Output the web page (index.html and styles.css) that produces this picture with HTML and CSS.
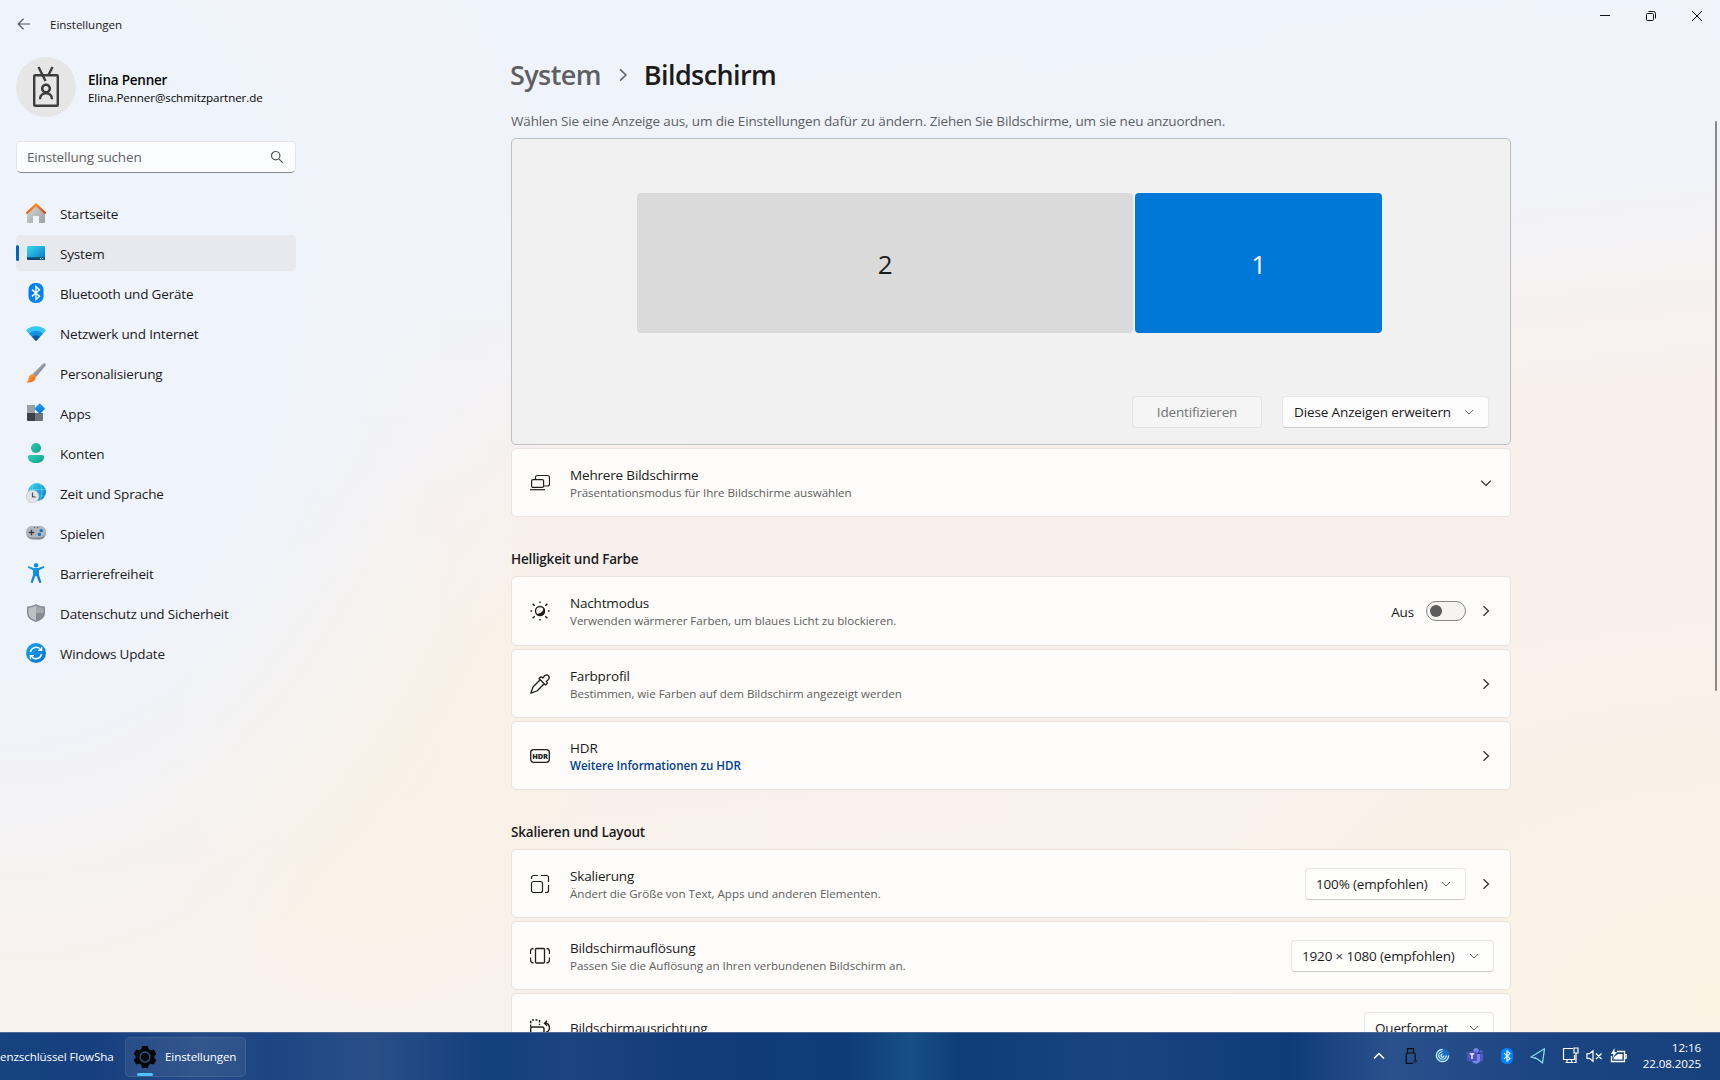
FILE: index.html
```html
<!DOCTYPE html>
<html lang="de">
<head>
<meta charset="utf-8">
<title>Einstellungen</title>
<link rel="stylesheet" href="styles.css">
</head>
<body>
<svg class="defs" aria-hidden="true">
  <defs>
    <linearGradient id="roof" x1="0" y1="0" x2="1" y2="1"><stop offset="0" stop-color="#ff9a1f"/><stop offset="1" stop-color="#d84a1b"/></linearGradient>
    <linearGradient id="grey" x1="0" y1="0" x2="1" y2="1"><stop offset="0" stop-color="#d9dbdd"/><stop offset="1" stop-color="#9c9fa3"/></linearGradient>
    <linearGradient id="screen" x1="0" y1="0" x2="1" y2="1"><stop offset="0" stop-color="#37dcf0"/><stop offset="1" stop-color="#0a72c4"/></linearGradient>
    <linearGradient id="teal" x1="0" y1="0" x2="1" y2="1"><stop offset="0" stop-color="#2ad0b4"/><stop offset="1" stop-color="#12a08c"/></linearGradient>
    <linearGradient id="blue" x1="0" y1="0" x2="1" y2="1"><stop offset="0" stop-color="#1aa5ec"/><stop offset="1" stop-color="#0671d4"/></linearGradient>
    <linearGradient id="flame" x1="0" y1="0" x2="1" y2="1"><stop offset="0" stop-color="#ffb13b"/><stop offset="1" stop-color="#ec5c14"/></linearGradient>
    <linearGradient id="steel" x1="0" y1="0" x2="1" y2="1"><stop offset="0" stop-color="#b9bfc6"/><stop offset="1" stop-color="#6d737b"/></linearGradient>
    <symbol id="down" viewBox="0 0 12 12"><path d="M1.2 3.8 6 8.4l4.8-4.6" fill="none" stroke="currentColor" stroke-width="1.2"/></symbol>
    <symbol id="right" viewBox="0 0 12 12"><path d="M3.5 1.2 8.5 6l-5 4.8" fill="none" stroke="currentColor" stroke-width="1.3"/></symbol>
  </defs>
</svg>
<div class="window">
  <header class="titlebar">
    <svg class="back" viewBox="0 0 14 12"><path d="M13 6H1.5M6.5.8 1.2 6l5.3 5.2" fill="none" stroke="#55585c" stroke-width="1.2"/></svg>
    <span class="app-name">Einstellungen</span>
    <div class="controls">
      <svg viewBox="0 0 12 12"><path d="M1 5.5h10" stroke="#111" stroke-width="1"/></svg>
      <svg viewBox="0 0 12 12" fill="none" stroke="#111"><rect x="1.5" y="3.5" width="7" height="7" rx="1"/><path d="M3.5 1.5H8.5Q10.5 1.5 10.5 3.5V8.5"/></svg>
      <svg viewBox="0 0 12 12"><path d="m1 1 10 10M11 1 1 11" stroke="#111" stroke-width="1"/></svg>
    </div>
  </header>
  <div class="body">
    <aside class="sidebar">
      <div class="account">
        <div class="avatar"><svg viewBox="0 0 28 42" fill="none" stroke="#3c3c3c" stroke-width="2.4"><path d="M6.5 1 13.5 15M20.500 1 16.500 9"/><rect x="2.200" y="9.200" width="23.600" height="30.600" rx="1"/><circle cx="14" cy="22.500" r="3.800" stroke-width="2.600"/><path d="M8 33.200c0-8 12-8 12 0" stroke-width="2.400"/></svg></div>
        <div><div class="user-name">Elina Penner</div><div class="user-mail">Elina.Penner@schmitzpartner.de</div></div>
      </div>
      <div class="search"><span>Einstellung suchen</span><svg viewBox="0 0 14 14" fill="none" stroke="#55585c" stroke-width="1.2"><circle cx="5.700" cy="5.700" r="4.200"/><path d="m8.800 8.800 4 4"/></svg></div>
      <nav class="nav">
        <a class="nav-item"><svg viewBox="0 0 20 20"><path d="M1 9 10 1l9 8v10a1 1 0 0 1-1 1h-5v-7H7v7H2a1 1 0 0 1-1-1z" fill="url(#grey)"/><path d="M1 9.800 10 1.600l9 8.200" fill="none" stroke="url(#roof)" stroke-width="2.400" stroke-linecap="round" stroke-linejoin="round"/></svg><span>Startseite</span></a>
        <a class="nav-item active"><svg viewBox="0 0 20 20"><rect x="1" y="3" width="18" height="14" rx="1" fill="url(#screen)"/><path d="M1 14.300h18V16a1 1 0 0 1-1 1H2a1 1 0 0 1-1-1z" fill="#0b4a73"/><path d="M14 15.600h1m1.200 0h1" stroke="#dff"/></svg><span>System</span></a>
        <a class="nav-item"><svg viewBox="0 0 20 20"><rect x="2.500" width="15" height="20" rx="6.500" fill="#0082fc"/><path d="m6 6.600 7.500 6.600L10 16.500v-13l3.500 3.300L6 13.400" fill="none" stroke="#fff" stroke-width="1.400"/></svg><span>Bluetooth und Geräte</span></a>
        <a class="nav-item"><svg viewBox="0 0 20 20"><path d="M0 7.500a14 14 0 0 1 20 0L10 18z" fill="#35c8f5"/><path d="M3 10.600a10 10 0 0 1 14 0L10 18z" fill="#1390df"/><path d="M6 13.800a6 6 0 0 1 8 0L10 18z" fill="#0c59a4"/></svg><span>Netzwerk und Internet</span></a>
        <a class="nav-item"><svg viewBox="0 0 20 20"><path d="M6.500 11 17 .8c1.500-1.300 3.500.2 2.500 1.900L10 14z" fill="url(#steel)"/><path d="M6.300 11.200c2 0 4 1.800 3.200 4.300-1 3-4.500 4.600-9 3.900 2.500-1.200 1.500-3 2.500-5.600.6-1.500 1.700-2.600 3.300-2.600z" fill="url(#flame)"/></svg><span>Personalisierung</span></a>
        <a class="nav-item"><svg viewBox="0 0 20 20"><path d="M1 2h8v8H1z" fill="#99a0a8"/><path d="M1 10h8v8H2a1 1 0 0 1-1-1z" fill="#3d4146"/><path d="M9 10h8v7a1 1 0 0 1-1 1H9z" fill="#6d737a"/><rect x="10" y="1.800" width="7.600" height="7.600" rx=".8" transform="rotate(45 13.800 5.600)" fill="url(#blue)"/></svg><span>Apps</span></a>
        <a class="nav-item"><svg viewBox="0 0 20 20" fill="url(#teal)"><circle cx="10" cy="5" r="5"/><path d="M4 12h12a2 2 0 0 1 2 2c0 4-3.500 6-8 6s-8-2-8-6a2 2 0 0 1 2-2z"/></svg><span>Konten</span></a>
        <a class="nav-item"><svg viewBox="0 0 20 20"><circle cx="11" cy="9" r="9" fill="url(#screen)"/><path d="M2.500 6.500h17M3 13h16M8 .8c-3 6-2 12 0 16M14 .8c3 6 2 12 0 16" fill="none" stroke="#55d3f4" stroke-width=".8"/><circle cx="6.500" cy="13.400" r="6.400" fill="#e2e3e5" stroke="#b5b8bc" stroke-width=".5"/><path d="M6.500 9.500v4.300h3" fill="none" stroke="#50545a" stroke-width="1.200"/></svg><span>Zeit und Sprache</span></a>
        <a class="nav-item"><svg viewBox="0 0 20 20"><rect y="3" width="20" height="13.500" rx="6.500" fill="url(#steel)"/><rect y="3" width="20" height="11.500" rx="5.700" fill="#b2b7bd"/><path d="M2.800 9.500h5.400M5.500 6.800v5.400" stroke="#393d42" stroke-width="1.400"/><path d="M8 4.600h1.200m2 0h1.200" stroke="#555"/><circle cx="15.300" cy="7.600" r="1.700" fill="#0a72d0"/><circle cx="13.400" cy="11.400" r="1.700" fill="#0a72d0"/></svg><span>Spielen</span></a>
        <a class="nav-item"><svg viewBox="0 0 20 20" fill="url(#blue)"><circle cx="10" cy="2.200" r="2.200"/><path d="M3 3.300 7.500 5h5L17 3.300c1.200-.4 1.700 1.300.6 1.800L13 7.300v4.500l2.200 7c.3 1.100-1.500 1.700-2 .6L10.600 13H9.400l-2.600 6.400c-.5 1.100-2.300.5-2-.6l2.200-7V7.300L2.400 5.100C1.300 4.600 1.800 2.900 3 3.300z"/></svg><span>Barrierefreiheit</span></a>
        <a class="nav-item"><svg viewBox="0 0 20 20"><path d="M10 1c2.500 1.700 5 2.400 9 2.500V10c0 4-3.500 7.500-9 9-5.500-1.500-9-5-9-9V3.500C5 3.400 7.500 2.700 10 1z" fill="#858b92"/><path d="M10 2.500v15C5.500 16 2.400 13.400 2.400 10V4.800c3-.1 5.400-.8 7.600-2.300z" fill="#bcc1c6"/><path d="M10 2.500c2.200 1.500 4.600 2.200 7.600 2.300V10H10z" fill="#a4a9b0"/></svg><span>Datenschutz und Sicherheit</span></a>
        <a class="nav-item"><svg viewBox="0 0 20 20"><circle cx="10" cy="10" r="10" fill="url(#blue)"/><path d="M4.500 9a5.700 5.700 0 0 1 10.300-2.200M15.500 11a5.700 5.700 0 0 1-10.300 2.200M15.600 3.800v3.600H12M4.400 16.200v-3.600H8" fill="none" stroke="#fff" stroke-width="1.400"/></svg><span>Windows Update</span></a>
      </nav>
    </aside>
    <main class="content">
      <h1 class="crumbs"><span class="parent">System</span><svg viewBox="0 0 12 12"><use href="#right"/></svg><span class="current">Bildschirm</span></h1>
      <p class="hint">Wählen Sie eine Anzeige aus, um die Einstellungen dafür zu ändern. Ziehen Sie Bildschirme, um sie neu anzuordnen.</p>
      <section class="arrange">
        <div class="monitors"><div class="monitor second">2</div><div class="monitor first">1</div></div>
        <div class="arrange-actions"><button class="control disabled">Identifizieren</button><button class="control extend">Diese Anzeigen erweitern<svg><use href="#down"/></svg></button></div>
      </section>
      <section class="card first-card">
        <svg class="icon" viewBox="0 0 20 20" fill="none" stroke="#1f1f1f" stroke-width="1.200"><path d="M5.500 6V4.500a2 2 0 0 1 2-2H17.500a2 2 0 0 1 2 2V11a2 2 0 0 1-2 2H14"/><rect x="1.600" y="6.600" width="12" height="7.800" rx="1.500"/><path d="M0 16.700h15"/></svg>
        <div class="label"><div class="name">Mehrere Bildschirme</div><div class="desc">Präsentationsmodus für Ihre Bildschirme auswählen</div></div>
        <svg class="chev"><use href="#down"/></svg>
      </section>
      <h2>Helligkeit und Farbe</h2>
      <section class="card tall">
        <svg class="icon" viewBox="0 0 20 20" fill="none" stroke="#1f1f1f" stroke-width="1.400"><circle cx="10" cy="10" r="4.500"/><path d="M13.500 6.500c-.2 4-2.500 6-7 6.500A4.800 4.800 0 1 0 13.500 6.500z" fill="#1f1f1f" stroke="none"/><path d="M10 .5v1.600M10 17.900v1.600M.5 10h1.600M17.900 10h1.600M2.700 2.700l2 2M15.300 15.300l2 2M2.700 17.300l2-2M15.300 4.700l2-2"/></svg>
        <div class="label"><div class="name">Nachtmodus</div><div class="desc">Verwenden wärmerer Farben, um blaues Licht zu blockieren.</div></div>
        <span class="state">Aus</span><span class="toggle"></span><svg class="chev"><use href="#right"/></svg>
      </section>
      <section class="card">
        <svg class="icon" viewBox="0 0 20 20" fill="none" stroke="#1f1f1f" stroke-width="1.300" stroke-linejoin="round"><path d="m9 4.500 2-1.800 1.700 1.300 2-2.200c2.600-2.400 6 1 3.700 3.600l-2.200 2 1.300 1.700-2 1.900zM10.200 5.800 3 13 .8 19.200 7 17l7.200-7.200"/></svg>
        <div class="label"><div class="name">Farbprofil</div><div class="desc">Bestimmen, wie Farben auf dem Bildschirm angezeigt werden</div></div>
        <svg class="chev"><use href="#right"/></svg>
      </section>
      <section class="card">
        <svg class="icon" viewBox="0 0 20 20"><rect x=".7" y="3.700" width="18.600" height="12.600" rx="3" fill="none" stroke="#1f1f1f" stroke-width="1.300"/><text x="10" y="12.800" class="hdr-text" text-anchor="middle">HDR</text></svg>
        <div class="label"><div class="name">HDR</div><a class="link">Weitere Informationen zu HDR</a></div>
        <svg class="chev"><use href="#right"/></svg>
      </section>
      <h2 class="scale-title">Skalieren und Layout</h2>
      <section class="card">
        <svg class="icon" viewBox="0 0 20 20" fill="none" stroke="#1f1f1f" stroke-width="1.200"><rect x="1.500" y="7.500" width="11" height="11" rx="2"/><path d="M1.500 5V3.500a2 2 0 0 1 2-2H8M11 1.500h5.500a2 2 0 0 1 2 2V8M18.500 11v5.500a2 2 0 0 1-2 2H15"/></svg>
        <div class="label"><div class="name">Skalierung</div><div class="desc">Ändert die Größe von Text, Apps und anderen Elementen.</div></div>
        <button class="control scale">100% (empfohlen)<svg><use href="#down"/></svg></button><svg class="chev"><use href="#right"/></svg>
      </section>
      <section class="card flush">
        <svg class="icon" viewBox="0 0 20 20" fill="none" stroke="#1f1f1f" stroke-width="1.300"><rect x="5.500" y="2.500" width="9" height="14.500" rx="1"/><path d="M3.500 2.500q-3 0-3 3V8M.5 11.500V14q0 3 3 3M16.500 2.500q3 0 3 3V8M19.500 11.500V14q0 3-3 3"/></svg>
        <div class="label"><div class="name">Bildschirmauflösung</div><div class="desc">Passen Sie die Auflösung an Ihren verbundenen Bildschirm an.</div></div>
        <button class="control resolution">1920 × 1080 (empfohlen)<svg><use href="#down"/></svg></button>
      </section>
      <section class="card flush">
        <svg class="icon" viewBox="0 0 20 20" fill="none" stroke="#1f1f1f" stroke-width="1.400"><path d="M.7 9V2M2 2h2M5.500 2h2M9.500 2v5" stroke-dasharray="2.500 1.200"/><path d="M.7 19V11q0-2 2-2H12q2 0 2 2v8M15 5.200h1.500q3 1 3 4.500t-3.500 4.500M17 2.700l-2.500 2.500L17 7.700"/></svg>
        <div class="label"><div class="name">Bildschirmausrichtung</div></div>
        <button class="control orientation">Querformat<svg><use href="#down"/></svg></button>
      </section>
    </main>
    <div class="scrollbar"></div>
  </div>
</div>
<footer class="taskbar">
  <span class="task cut">enzschlüssel FlowSha</span>
  <div class="task running"><svg viewBox="0 0 24 24"><path d="M9.200 1h5.600l.8 3 2.200 1.200 3-.8L23.300 9l-2 2.200v1.600l2 2.200-2.500 4.600-3-.8-2.200 1.200-.8 3H9.200l-.8-3-2.200-1.200-3 .8L.7 15l2-2.200v-1.600L.7 9l2.500-4.600 3 .8L8.400 4z" fill="#050608"/><circle cx="12" cy="12" r="5" fill="none" stroke="#31548a" stroke-width="1.300"/></svg>Einstellungen</div>
  <div class="tray">
    <svg class="t-up" viewBox="0 0 12 16" fill="none" stroke="#fff" stroke-width="1.500"><path d="m1 10.500 5-5 5 5"/></svg>
    <svg class="t-usb" viewBox="0 0 14 16" fill="none" stroke="#0a0d12" stroke-width="1.200"><path d="M2.500 5V.7h6V5M3 15.400H1.200V6.500Q1.200 5 2.700 5h6q1.500 0 1.500 1.500V13M3 15.400h5"/><path d="M8 12.800l1.800 2L12.500 12" stroke="#1c2c48"/></svg>
    <svg class="t-spin" viewBox="0 0 16 16" fill="none"><circle cx="8" cy="8" r="7.500" fill="#1a6cc0"/><path d="M8 1.500a6.500 6.500 0 1 0 6.500 6.500M8 4a4 4 0 1 0 4 4M8 6.500a1.600 1.600 0 1 0 1.600 1.500" stroke="#d7f0ff" stroke-width="1.300"/></svg>
    <svg class="t-teams" viewBox="0 0 16 16"><circle cx="9" cy="2.600" r="2.600" fill="#7b83eb"/><circle cx="14" cy="3.500" r="1.800" fill="#5059c9"/><path d="M5 6h8v6c0 5-8 5-8 0z" fill="#7b83eb"/><path d="M13 6h3v5c0 2-1.500 3-3 2.500z" fill="#5059c9"/><rect y="3.500" width="10" height="9.500" rx="1" fill="#4b53bc"/><path d="M2.700 5.800h4.600M5 5.800v5.200" stroke="#fff" stroke-width="1.300"/></svg>
    <svg class="t-bt" viewBox="0 0 12 16"><rect width="12" height="16" rx="5.500" fill="#0082fc"/><path d="m3 5.200 6 5.200-3 2.700V2.900l3 2.700L3 10.800" fill="none" stroke="#fff" stroke-width="1.100"/></svg>
    <svg class="t-plane" viewBox="0 0 16 16" fill="none" stroke="#85dbef" stroke-width="1.300" stroke-linejoin="round"><path d="M1 9 14.500.8 12.500 15 7.500 11zM7.500 11 4.500 9.500"/></svg>
    <svg class="t-net" viewBox="0 0 18 17" fill="none" stroke="#fff" stroke-width="1.200"><path d="M11 1.500H1.500v11h11V8M3.500 15.500h8M5 12.500v3M9.500 12.500v3M12 1h4v5h-4zM14 6v9.500h-2"/></svg>
    <svg class="t-sound" viewBox="0 0 17 16" fill="none" stroke="#fff" stroke-width="1.200"><path d="M1 5.700h2.500L7 2.800v10.400l-3.500-2.900H1zM10 5.500l5.500 5.500M15.500 5.500 10 11"/></svg>
    <svg class="t-bat" viewBox="0 0 18 16" fill="none" stroke="#fff" stroke-width="1.300"><path d="M7 3.500h7.500v10H1.500V8M14.500 6.700h1.700v3.500h-1.700"/><path d="M3.500 11.500V9.500L8 6h4.500v5.500z" fill="#fff" stroke="none"/><path d="M4.500 0 1 6h2.500L2.500 10 7 4H4.500z" fill="#fff" stroke="none"/></svg>
    <div class="clock"><span>12:16</span><span>22.08.2025</span></div>
  </div>
</footer>
</body>
</html>
```
FILE: styles.css
```css
* { box-sizing: border-box; }
body {
  margin: 0;
  width: 1720px;
  height: 1080px;
  overflow: hidden;
  display: flex;
  flex-direction: column;
  font: 13.5px/20px "Open Sans", "Noto Sans", sans-serif;
  letter-spacing: -0.17px;
  color: #1b1b1b;
}
svg { display: block; flex: none; }
.defs { position: absolute; width: 0; height: 0; }
.window {
  flex: none;
  height: 1032px;
  overflow: hidden;
  display: flex;
  flex-direction: column;
  background:
    radial-gradient(ellipse 560px 700px at 0 320px, #eff3fb 0%, #eff3fb 50%, rgba(241, 243, 247, 0.6) 75%, rgba(245, 242, 240, 0) 100%),
    radial-gradient(ellipse 620px 420px at 1720px 1000px, #faf2e3 0%, rgba(250, 242, 227, 0) 100%),
    radial-gradient(ellipse 260px 280px at 380px 740px, #faf1e6 0%, #faf1e7 50%, rgba(250, 241, 232, 0) 100%),
    linear-gradient(174deg, #eff3fb 0%, #f0f3fa 26%, #f4f2f3 35%, #f9f0ed 46%, #f9f1eb 100%);
}
.titlebar { flex: none; height: 48px; display: flex; align-items: center; padding: 0 17px; }
.back { width: 14px; height: 12px; }
.app-name { font-size: 11.6px; margin-left: 19px; padding-top: 2px; letter-spacing: -0.05px; }
.controls { margin-left: auto; align-self: flex-start; display: flex; gap: 34px; padding-top: 10px; }
.controls svg { width: 12px; height: 12px; }
.body { flex: 1; min-height: 0; display: flex; }
.sidebar { width: 296px; padding: 9px 0 0 16px; }
.account { display: flex; align-items: center; gap: 12px; height: 60px; color: #050505; }
.avatar { width: 60px; height: 60px; border-radius: 50%; background: #e6e6e6; display: flex; align-items: center; justify-content: center; }
.avatar svg { width: 28px; height: 42px; }
.user-name { font-weight: 600; line-height: 18px; padding-top: 2px; letter-spacing: -0.22px; }
.user-mail { font-size: 11.6px; line-height: 17px; letter-spacing: -0.08px; }
.search { margin-top: 24px; height: 32px; border: 1px solid #e2e4ea; border-bottom-color: #85878b; border-radius: 5px; background: #fbfcfe; display: flex; align-items: center; justify-content: space-between; padding: 0 11px 0 10px; color: #606266; }
.search svg { width: 14px; height: 14px; }
.nav { margin-top: 22px; display: flex; flex-direction: column; gap: 4px; }
.nav-item { height: 36px; display: flex; align-items: center; gap: 14px; padding-left: 10px; border-radius: 5px; position: relative; }
.nav-item svg { width: 20px; height: 20px; }
.nav-item span { padding-top: 2px; }
.active { background: #e7e9ee; }
.active::before { content: ""; position: absolute; left: 0; top: 10px; width: 3px; height: 16px; border-radius: 2px; background: #0067c0; }
.content { width: 1000px; margin-left: 215px; }
.crumbs { margin: 0 0 0 -1px; height: 54px; padding-top: 8px; display: flex; align-items: flex-start; font-size: 27px; line-height: 38px; font-weight: 600; letter-spacing: -0.6px; }
.crumbs svg { width: 14px; height: 14px; margin: 12px 14px 0 15px; color: #5d5e61; }
.parent { color: #5d5f63; }
.hint { margin: 0; padding-top: 9px; height: 36px; color: #5d5f63; letter-spacing: -0.145px; }
.arrange { height: 307px; border: 1px solid #bfc0c3; border-radius: 5px; background: #f1f1f1; padding: 54px 21px 0; }
.monitors { display: flex; gap: 2px; margin-left: 104px; }
.monitor { height: 140px; border-radius: 4px; display: flex; align-items: center; justify-content: center; font-size: 26px; padding-top: 2px; }
.second { width: 496px; background: #dadada; }
.first { width: 247px; background: #0078d7; color: #fff; }
.arrange-actions { display: flex; justify-content: flex-end; gap: 20px; margin-top: 63px; }
.control { height: 32px; border: 1px solid #e7e6e5; border-bottom-color: #cccbca; border-radius: 4px; background: #fefefd; font: inherit; letter-spacing: -0.17px; color: inherit; display: flex; align-items: center; justify-content: space-between; padding: 0 14px 0 10px; white-space: nowrap; }
.control svg { width: 10px; height: 10px; color: #606060; }
.disabled { width: 130px; justify-content: center; padding: 0; color: #747474; background: #f5f5f5; border-color: #e4e4e4; }
.extend { width: 207px; padding-left: 11px; background: #fcfcfc; letter-spacing: -0.12px; }
.scale { width: 161px; margin-right: 14px; }
.resolution { width: 203px; }
.orientation { width: 130px; }
.card { height: 69px; margin-top: 3px; border: 1px solid #ebe4de; border-radius: 5px; background: #fdfcfa; display: flex; align-items: center; padding: 0 18px; }
.tall { height: 70px; }
.icon { width: 20px; height: 20px; }
.label { margin: 1px auto 0 20px; }
.name { line-height: 18px; }
.desc, .link { display: block; font-size: 11.6px; line-height: 17px; letter-spacing: -0.03px; color: #606060; }
.link { font-weight: 600; color: #003e92; }
.chev { width: 12px; height: 12px; color: #333; }
.state { margin-right: 12px; padding-top: 2px; }
.toggle { width: 40px; height: 20px; border: 1px solid #868686; border-radius: 10px; background: #f5f4f3; margin-right: 14px; padding: 3px; }
.toggle::before { content: ""; display: block; width: 12px; height: 12px; border-radius: 50%; background: #5c5c5c; }
.flush { padding-right: 16px; }
.hdr-text { font: 800 7.4px "Open Sans", sans-serif; letter-spacing: -0.2px; fill: #1f1f1f; }
h2 { margin: 32px 0 0; height: 24px; font-size: 13.5px; line-height: 21px; font-weight: 600; letter-spacing: -0.18px; }
.scrollbar { width: 2px; height: 570px; margin: 73px 3px 0 auto; border-radius: 1px; background: #8b8987; }
.taskbar { height: 48px; border-top: 1px solid #4a699b; color: #fff; font-size: 11.6px; display: flex; align-items: center; background: linear-gradient(90deg, #17437f 0, #163f80 90px, #264b85 200px, #1d4583 270px, #2a4f87 370px, #133f7d 490px, #1c4480 570px, #113b79 700px, #0f3c78 850px, #174f86 910px, #0e3d77 960px, #1a4480 1120px, #0f3b79 1290px, #2b518c 1390px, #1b4582 1540px, #17417d 1720px); }
.cut { width: 114px; }
.task { white-space: nowrap; letter-spacing: -0.1px; }
.running { position: relative; width: 121px; height: 40px; margin-left: 11px; padding-left: 7px; display: flex; align-items: center; gap: 8px; border: 1px solid rgba(255, 255, 255, 0.09); border-radius: 5px; background: rgba(255, 255, 255, 0.06); }
.running svg { width: 24px; height: 24px; }
.running::after { content: ""; position: absolute; left: 11px; bottom: 0; width: 16px; height: 3px; border-radius: 2px; background: #4cc2ff; }
.tray { margin-left: auto; display: flex; align-items: center; padding: 0 19px 2px 0; }
.t-up { width: 12px; height: 16px; }
.t-usb { width: 14px; height: 16px; margin-left: 20px; }
.t-spin { width: 15px; height: 15px; margin-left: 16px; }
.t-teams { width: 16px; height: 16px; margin-left: 17px; }
.t-bt { width: 12px; height: 16px; margin-left: 18px; }
.t-plane { width: 16px; height: 16px; margin-left: 17px; }
.t-net { width: 18px; height: 17px; margin-left: 16px; }
.t-sound { width: 17px; height: 16px; margin-left: 6px; }
.t-bat { width: 18px; height: 16px; margin-left: 7px; }
.clock { width: 73px; display: flex; flex-direction: column; align-items: flex-end; line-height: 16px; letter-spacing: -0.08px; }
```
